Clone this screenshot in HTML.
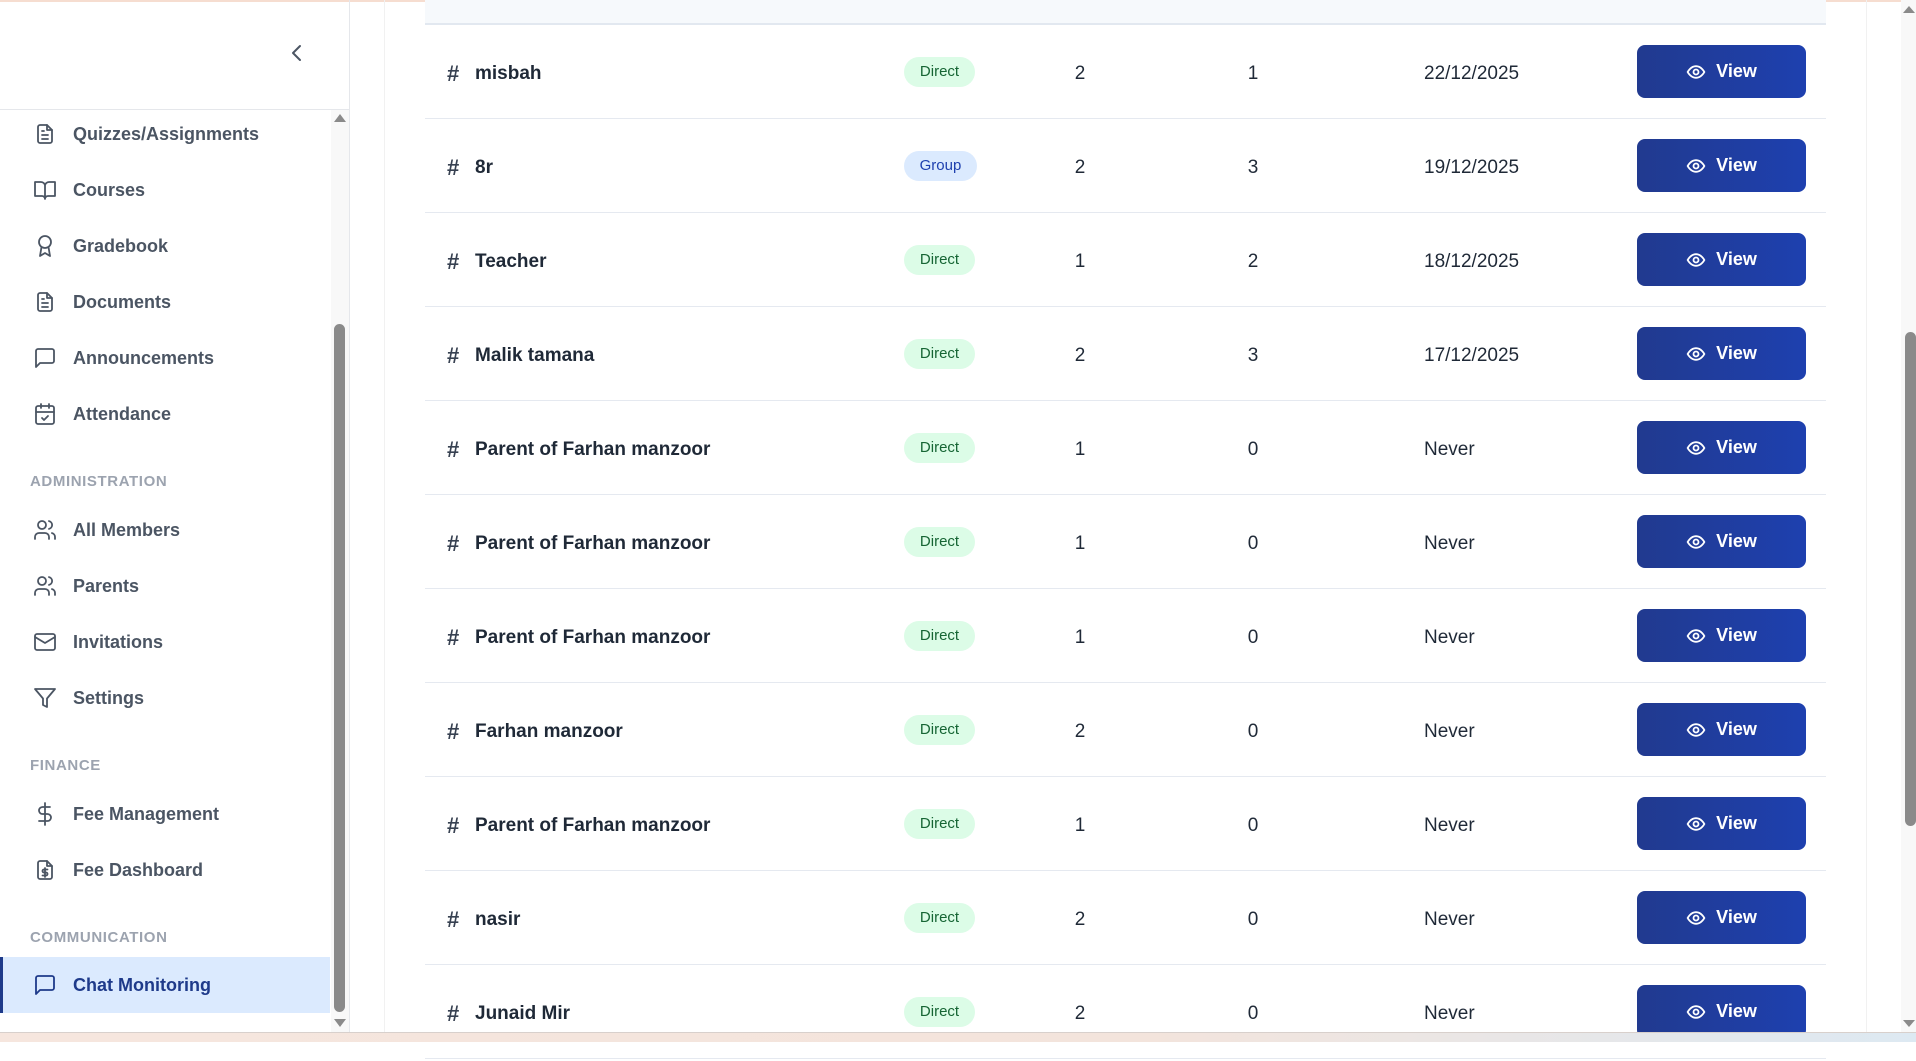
<!DOCTYPE html>
<html><head><meta charset="utf-8"><style>
*{box-sizing:border-box;margin:0;padding:0}
body{width:1916px;height:1042px;overflow:hidden;background:#fff;font-family:"Liberation Sans",sans-serif;position:relative}
.abs{position:absolute}
.nav{position:absolute;left:0;width:330px;height:56px;display:flex;align-items:center;font-size:18px;color:#4b5563;font-weight:bold}
.nav svg{position:absolute;left:33px;width:24px;height:24px;fill:none;stroke:#4b5563;stroke-width:1.8;stroke-linecap:round;stroke-linejoin:round}
.nav span{position:absolute;left:73px;top:18px}
.sec{position:absolute;left:30px;font-size:15px;font-weight:bold;color:#9ca3af;letter-spacing:.6px}
.row{position:absolute;left:425px;width:1401px;height:94px;border-bottom:1.5px solid #e5e9f0;font-size:19px;color:#1f2937}
.row .h{position:absolute;left:22px;top:2px;line-height:94px;font-size:22px;color:#374151;font-weight:bold}
.row .n{position:absolute;left:50px;top:2px;line-height:94px;font-weight:bold;color:#1f2937}
.badge{position:absolute;left:479px;top:32px;height:30px;width:71px;border-radius:15px;font-size:15px;text-align:center;line-height:30px}
.d{background:#dcfce7;color:#166534}.g{background:#dbeafe;color:#1e40af;width:73px}
.c1{position:absolute;left:649px;top:2px;width:12px;text-align:center;line-height:94px}
.c2{position:absolute;left:822px;top:2px;width:12px;text-align:center;line-height:94px}
.c3{position:absolute;left:999px;top:2px;line-height:94px}
.btn{position:absolute;left:1212px;top:20px;width:169px;height:53px;border-radius:8px;background:linear-gradient(90deg,#213a8f,#1e40af);color:#fff;font-weight:bold;font-size:18px;display:flex;align-items:center;justify-content:center;gap:10px}
.btn svg{width:20px;height:20px;fill:none;stroke:#fff;stroke-width:2.2}
</style></head><body>
<div class="abs" style="left:0;top:0;width:1916px;height:2px;background:#f6ddd0"></div>
<div class="abs" style="left:349px;top:0;width:1px;height:1032px;background:#e5e7eb"></div>
<div class="abs" style="left:0;top:109px;width:349px;height:1px;background:#e5e7eb"></div>
<svg class="abs" style="left:288px;top:43px" width="18" height="20" viewBox="0 0 18 20"><path d="M12 3 L5 10 L12 17" fill="none" stroke="#4b5563" stroke-width="2" stroke-linecap="round" stroke-linejoin="round"/></svg>
<div class="abs" style="left:331px;top:110px;width:18px;height:922px;background:#f8f8f8"></div>
<div class="abs" style="left:334px;top:114px;width:0;height:0;border-left:6px solid transparent;border-right:6px solid transparent;border-bottom:8px solid #8a8a8a"></div>
<div class="abs" style="left:334px;top:1019px;width:0;height:0;border-left:6px solid transparent;border-right:6px solid transparent;border-top:8px solid #8a8a8a"></div>
<div class="abs" style="left:334px;top:324px;width:11px;height:688px;border-radius:6px;background:#8a8a8a"></div>

<div class="nav" style="top:106px"><svg viewBox="0 0 24 24"><path d="M14 3H7a2 2 0 0 0-2 2v14a2 2 0 0 0 2 2h10a2 2 0 0 0 2-2V8z"/><path d="M14 3v5h5M9 13h6M9 17h6M9 9h2"/></svg><span>Quizzes/Assignments</span></div>
<div class="nav" style="top:162px"><svg viewBox="0 0 24 24"><path d="M2 4h6a4 4 0 0 1 4 4v13a3 3 0 0 0-3-3H2zM22 4h-6a4 4 0 0 0-4 4v13a3 3 0 0 1 3-3h7z"/></svg><span>Courses</span></div>
<div class="nav" style="top:218px"><svg viewBox="0 0 24 24"><circle cx="12" cy="8" r="6"/><path d="M8.5 13L7 22l5-3 5 3-1.5-9"/></svg><span>Gradebook</span></div>
<div class="nav" style="top:274px"><svg viewBox="0 0 24 24"><path d="M14 3H7a2 2 0 0 0-2 2v14a2 2 0 0 0 2 2h10a2 2 0 0 0 2-2V8z"/><path d="M14 3v5h5M9 13h6M9 17h6M9 9h2"/></svg><span>Documents</span></div>
<div class="nav" style="top:330px"><svg viewBox="0 0 24 24"><path d="M21 15a2 2 0 0 1-2 2H7l-4 4V5a2 2 0 0 1 2-2h14a2 2 0 0 1 2 2z"/></svg><span>Announcements</span></div>
<div class="nav" style="top:386px"><svg viewBox="0 0 24 24"><rect x="3" y="4" width="18" height="18" rx="2"/><path d="M16 2v4M8 2v4M3 10h18M9 16l2 2 4-4"/></svg><span>Attendance</span></div>
<div class="sec" style="top:473px">ADMINISTRATION</div>
<div class="nav" style="top:502px"><svg viewBox="0 0 24 24"><path d="M16 21v-2a4 4 0 0 0-4-4H6a4 4 0 0 0-4 4v2"/><circle cx="9" cy="7" r="4"/><path d="M22 21v-2a4 4 0 0 0-3-3.9M16 3.1a4 4 0 0 1 0 7.8"/></svg><span>All Members</span></div>
<div class="nav" style="top:558px"><svg viewBox="0 0 24 24"><path d="M16 21v-2a4 4 0 0 0-4-4H6a4 4 0 0 0-4 4v2"/><circle cx="9" cy="7" r="4"/><path d="M22 21v-2a4 4 0 0 0-3-3.9M16 3.1a4 4 0 0 1 0 7.8"/></svg><span>Parents</span></div>
<div class="nav" style="top:614px"><svg viewBox="0 0 24 24"><rect x="2" y="4" width="20" height="16" rx="2"/><path d="M22 7l-10 6L2 7"/></svg><span>Invitations</span></div>
<div class="nav" style="top:670px"><svg viewBox="0 0 24 24"><path d="M22 3H2l8 9.5V19l4 2v-8.5z"/></svg><span>Settings</span></div>
<div class="sec" style="top:757px">FINANCE</div>
<div class="nav" style="top:786px"><svg viewBox="0 0 24 24"><path d="M12 1v22M17 5H9.5a3.5 3.5 0 0 0 0 7h5a3.5 3.5 0 0 1 0 7H6"/></svg><span>Fee Management</span></div>
<div class="nav" style="top:842px"><svg viewBox="0 0 24 24"><path d="M14 3H7a2 2 0 0 0-2 2v14a2 2 0 0 0 2 2h10a2 2 0 0 0 2-2V8z"/><path d="M14 3v5h5M12 10v9M14.5 11.5h-3.5a1.5 1.5 0 0 0 0 3h2a1.5 1.5 0 0 1 0 3H9.5"/></svg><span>Fee Dashboard</span></div>
<div class="sec" style="top:929px">COMMUNICATION</div>
<div class="abs" style="left:0;top:957px;width:330px;height:56px;background:#dbeafe;border-left:3px solid #1e3a8a"></div>
<div class="nav" style="top:957px;color:#1e3a8a"><svg viewBox="0 0 24 24" style="stroke:#1e3a8a"><path d="M21 15a2 2 0 0 1-2 2H7l-4 4V5a2 2 0 0 1 2-2h14a2 2 0 0 1 2 2z"/></svg><span>Chat Monitoring</span></div>

<div class="abs" style="left:384px;top:0;width:1px;height:1032px;background:#f1f1f1"></div>
<div class="abs" style="left:1866px;top:0;width:1px;height:1032px;background:#f1f1f1"></div>
<div class="abs" style="left:425px;top:0;width:1401px;height:25px;background:#f6f9fc;border-bottom:2px solid #e2e8f0"></div>

<div class="row" style="top:25px"><span class="h">#</span><span class="n">misbah</span><span class="badge d">Direct</span><span class="c1">2</span><span class="c2">1</span><span class="c3">22/12/2025</span><div class="btn"><svg viewBox="0 0 24 24"><path d="M2 12s3.5-7 10-7 10 7 10 7-3.5 7-10 7S2 12 2 12z"/><circle cx="12" cy="12" r="3"/></svg>View</div></div>
<div class="row" style="top:119px"><span class="h">#</span><span class="n">8r</span><span class="badge g">Group</span><span class="c1">2</span><span class="c2">3</span><span class="c3">19/12/2025</span><div class="btn"><svg viewBox="0 0 24 24"><path d="M2 12s3.5-7 10-7 10 7 10 7-3.5 7-10 7S2 12 2 12z"/><circle cx="12" cy="12" r="3"/></svg>View</div></div>
<div class="row" style="top:213px"><span class="h">#</span><span class="n">Teacher</span><span class="badge d">Direct</span><span class="c1">1</span><span class="c2">2</span><span class="c3">18/12/2025</span><div class="btn"><svg viewBox="0 0 24 24"><path d="M2 12s3.5-7 10-7 10 7 10 7-3.5 7-10 7S2 12 2 12z"/><circle cx="12" cy="12" r="3"/></svg>View</div></div>
<div class="row" style="top:307px"><span class="h">#</span><span class="n">Malik tamana</span><span class="badge d">Direct</span><span class="c1">2</span><span class="c2">3</span><span class="c3">17/12/2025</span><div class="btn"><svg viewBox="0 0 24 24"><path d="M2 12s3.5-7 10-7 10 7 10 7-3.5 7-10 7S2 12 2 12z"/><circle cx="12" cy="12" r="3"/></svg>View</div></div>
<div class="row" style="top:401px"><span class="h">#</span><span class="n">Parent of Farhan manzoor</span><span class="badge d">Direct</span><span class="c1">1</span><span class="c2">0</span><span class="c3">Never</span><div class="btn"><svg viewBox="0 0 24 24"><path d="M2 12s3.5-7 10-7 10 7 10 7-3.5 7-10 7S2 12 2 12z"/><circle cx="12" cy="12" r="3"/></svg>View</div></div>
<div class="row" style="top:495px"><span class="h">#</span><span class="n">Parent of Farhan manzoor</span><span class="badge d">Direct</span><span class="c1">1</span><span class="c2">0</span><span class="c3">Never</span><div class="btn"><svg viewBox="0 0 24 24"><path d="M2 12s3.5-7 10-7 10 7 10 7-3.5 7-10 7S2 12 2 12z"/><circle cx="12" cy="12" r="3"/></svg>View</div></div>
<div class="row" style="top:589px"><span class="h">#</span><span class="n">Parent of Farhan manzoor</span><span class="badge d">Direct</span><span class="c1">1</span><span class="c2">0</span><span class="c3">Never</span><div class="btn"><svg viewBox="0 0 24 24"><path d="M2 12s3.5-7 10-7 10 7 10 7-3.5 7-10 7S2 12 2 12z"/><circle cx="12" cy="12" r="3"/></svg>View</div></div>
<div class="row" style="top:683px"><span class="h">#</span><span class="n">Farhan manzoor</span><span class="badge d">Direct</span><span class="c1">2</span><span class="c2">0</span><span class="c3">Never</span><div class="btn"><svg viewBox="0 0 24 24"><path d="M2 12s3.5-7 10-7 10 7 10 7-3.5 7-10 7S2 12 2 12z"/><circle cx="12" cy="12" r="3"/></svg>View</div></div>
<div class="row" style="top:777px"><span class="h">#</span><span class="n">Parent of Farhan manzoor</span><span class="badge d">Direct</span><span class="c1">1</span><span class="c2">0</span><span class="c3">Never</span><div class="btn"><svg viewBox="0 0 24 24"><path d="M2 12s3.5-7 10-7 10 7 10 7-3.5 7-10 7S2 12 2 12z"/><circle cx="12" cy="12" r="3"/></svg>View</div></div>
<div class="row" style="top:871px"><span class="h">#</span><span class="n">nasir</span><span class="badge d">Direct</span><span class="c1">2</span><span class="c2">0</span><span class="c3">Never</span><div class="btn"><svg viewBox="0 0 24 24"><path d="M2 12s3.5-7 10-7 10 7 10 7-3.5 7-10 7S2 12 2 12z"/><circle cx="12" cy="12" r="3"/></svg>View</div></div>
<div class="row" style="top:965px"><span class="h">#</span><span class="n">Junaid Mir</span><span class="badge d">Direct</span><span class="c1">2</span><span class="c2">0</span><span class="c3">Never</span><div class="btn"><svg viewBox="0 0 24 24"><path d="M2 12s3.5-7 10-7 10 7 10 7-3.5 7-10 7S2 12 2 12z"/><circle cx="12" cy="12" r="3"/></svg>View</div></div>

<div class="abs" style="left:1901px;top:0;width:15px;height:1032px;background:#f8f8f8"></div>
<div class="abs" style="left:1903px;top:6px;width:0;height:0;border-left:6px solid transparent;border-right:6px solid transparent;border-bottom:7px solid #8a8a8a"></div>
<div class="abs" style="left:1903px;top:1020px;width:0;height:0;border-left:6px solid transparent;border-right:6px solid transparent;border-top:7px solid #8a8a8a"></div>
<div class="abs" style="left:1905px;top:332px;width:11px;height:494px;border-radius:6px;background:#8a8a8a"></div>
<div class="abs" style="left:0;top:1032px;width:1916px;height:10px;background:linear-gradient(90deg,#f6e6de,#f3e4dc 60%,#dde9f2);border-top:1px solid #d8d0cc"></div>
</body></html>
